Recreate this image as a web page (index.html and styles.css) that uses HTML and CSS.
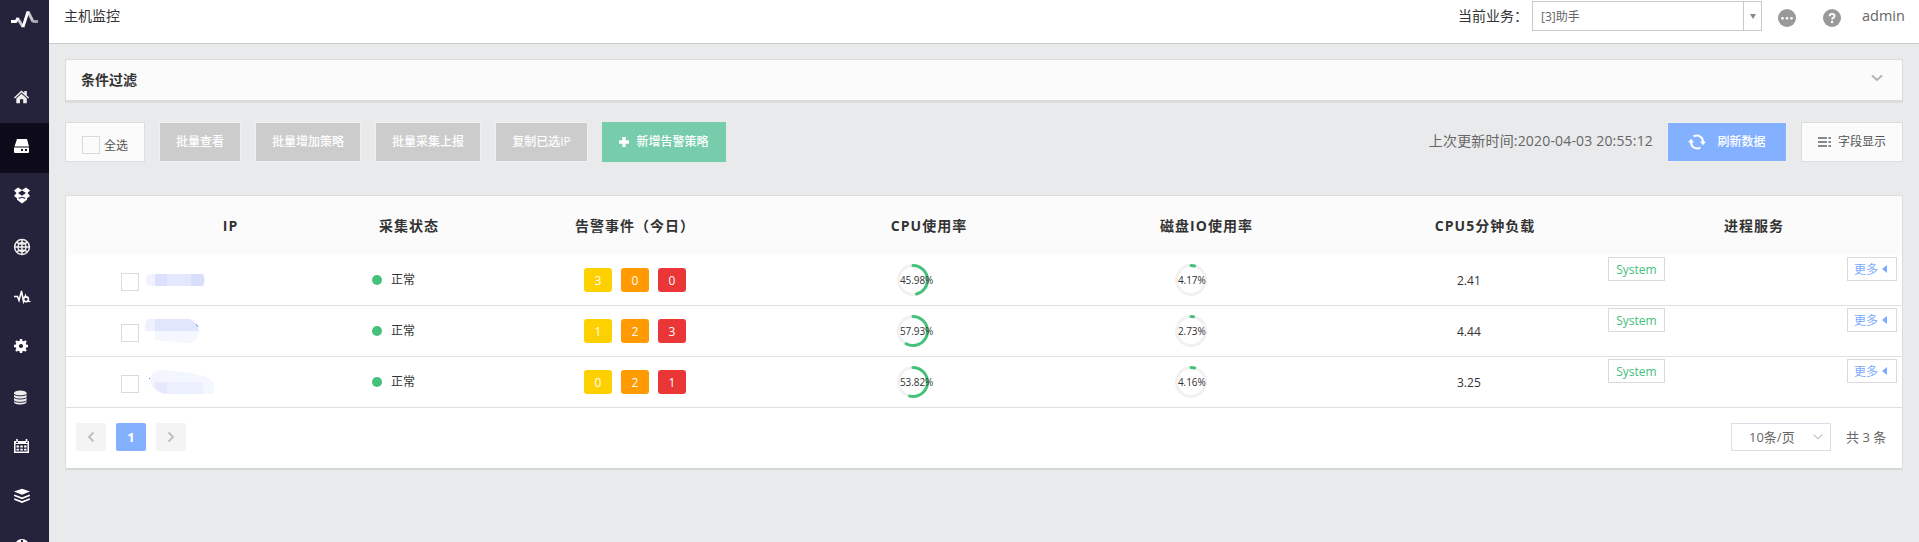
FILE: index.html
```html
<!DOCTYPE html>
<html lang="zh-CN">
<head>
<meta charset="utf-8">
<title>主机监控</title>
<link rel="stylesheet" href="styles.css">
</head>
<body>
<div class="app">
  <nav class="sidebar">
    <svg class="logo" viewBox="0 0 49 73"><g fill="none" stroke-width="2.800" stroke-linejoin="round"><path d="M17.500 18l5.500 9" stroke="#c9c8d2"/><path d="M28 11.500l5 10" stroke="#c9c8d2"/><path d="M11 21.500h5l2-3.500" stroke="#fff"/><path d="M23 27l5-15.500" stroke="#fff"/><path d="M32.500 21.500h5.500" stroke="#aaa9b8"/></g></svg>
    <svg class="item" viewBox="0 0 49 50"><path d="M14 24.500L21.500 17.500 24.300 20v-2h2.500v4.400l2.400 2.100-1 1.100-6.700-6-6.500 6z" fill="#eee"/><path d="M16.300 25.500l5.200-4.700 5.300 4.700v4.700h-3.600v-4h-3.200v4h-3.700z" fill="#eee"/></svg>
    <svg class="item active" viewBox="0 0 49 50"><path d="M17 16h10l2 7.500H14.500z" fill="#fff"/><path d="M14 24.500h15V29q0 1-1 1H15q-1 0-1-1z" fill="#fff"/><path d="M21 26h2v2h-2zM25 26h2v2h-2z" fill="#15132a"/></svg>
    <svg class="item" viewBox="0 0 49 50"><path fill="#fff" d="M18 14.500l4 2.500 4-2.500 4 3-2.500 2.500 2.500 3-3 2.300v1.500L22 30.500l-5-3.700v-1.500L14 23l2.500-3-2.500-2.500z"/><path fill="#25233b" d="M22 17.500l4 2.600-4 2.600-4-2.600zM18 25l4-1.200 4 1.200-1.500.8-2.500-1.100-2.500 1.100z"/></svg>
    <svg class="item" viewBox="0 0 49 50"><g fill="none" stroke="#eee" stroke-width="1.500"><circle cx="22" cy="24" r="7.400"/><ellipse cx="22" cy="24" rx="4" ry="4.500"/><path d="M15 24h14M22 17v14M17 19.500q5 3 10 0M17 28.500q5-3 10 0"/></g></svg>
    <svg class="item" viewBox="0 0 49 50"><path d="M14 23.500h3.500l1.500 4 2.500-9.500 2 10.500 2-6 1 3" fill="none" stroke="#fff" stroke-width="1.500"/><circle cx="26" cy="26.300" r="2.400" fill="#25233b" stroke="#fff" stroke-width="1.700"/><path d="M27.500 28.500h3" stroke="#fff" stroke-width="1.200"/></svg>
    <svg class="item" viewBox="0 0 49 50"><circle cx="21" cy="23" r="3.800" fill="none" stroke="#fff" stroke-width="3.400"/><path d="M21 16v3M21 27v3M14 23h3M25 23h3M16 18l2 2M24 26l2 2M26 18l-2 2M18 26l-2 2" stroke="#fff" stroke-width="2.400"/></svg>
    <svg class="item" viewBox="0 -1.500 49 50"><path d="M14 18.500v9c0 1.600 2.500 2.500 6.300 2.500s6.200-1 6.200-2.500v-9z" fill="#eee"/><ellipse cx="20.300" cy="18.500" rx="6.300" ry="2.500" fill="#eee"/><path d="M14 19.800c2 2 10.500 2 12.500 0M14 23c2 2 10.500 2 12.500 0M14 26.300c2 2 10.500 2 12.500 0" fill="none" stroke="#25233b"/></svg>
    <svg class="item" viewBox="0 0 49 50"><path fill="#fff" fill-rule="evenodd" d="M14 18h2v2h2v-2h8v2h1.500v-2H29v12H14zM15.500 21v7.500h12V21z"/><path d="M17 16v3M26.500 16v3" stroke="#fff" stroke-width="1.600"/><path d="M16.500 22.500h2.500v2h-2.500zM20.300 22.500h2.500v2h-2.500zM24.100 22.500h2.500v2h-2.500zM16.500 25.800h2.500v1.700h-2.500zM20.300 25.800h2.500v1.700h-2.500zM24.100 25.800h2.500v1.700h-2.500z" fill="#fff"/></svg>
    <svg class="item" viewBox="0 0 49 50"><path d="M14 18.500l8-2.800 8 2.800-8 3.300z" fill="#fff"/><path d="M14.200 22.300l7.800 3 7.800-3M14.200 26l7.800 3 7.800-3" fill="none" stroke="#fff" stroke-width="1.700"/></svg>
    <svg class="item" viewBox="0 0 49 50"><circle cx="22" cy="23.500" r="7.500" fill="#fff"/><path d="M22 17v7h4" stroke="#25233b" stroke-width="2" fill="none"/></svg>
  </nav>
  <div class="main">
    <header class="topbar">
      <h1>主机监控</h1>
      <label class="biz-label">当前业务：</label>
      <div class="biz-select"><span>[3]助手</span><b><i></i></b></div>
      <svg class="top-icon" viewBox="0 0 18 18"><circle cx="9" cy="9" r="9" fill="#999"/><g fill="#fff"><circle cx="4.500" cy="9.300" r="1.300"/><circle cx="9" cy="9.300" r="1.300"/><circle cx="13.500" cy="9.300" r="1.300"/></g></svg>
      <svg class="top-icon help" viewBox="0 0 18 18"><circle cx="9" cy="9" r="9" fill="#999"/><path d="M6.700 7.200q0-2.300 2.400-2.300t2.400 2q0 1.200-1.300 2-1.100.6-1.100 1.700" fill="none" stroke="#fff" stroke-width="1.900"/><circle cx="9.100" cy="13" r="1.200" fill="#fff"/></svg>
      <span class="user">admin</span>
    </header>
    <main class="content">
      <section class="filter"><h2>条件过滤</h2><svg viewBox="0 0 12 8"><path d="M1 1.500l5 4.500 5-4.500" fill="none" stroke="#b2b2b2" stroke-width="2"/></svg></section>
      <div class="toolbar">
        <label class="btn-light select-all"><i class="check"></i><span>全选</span></label>
        <button class="btn-grey">批量查看</button>
        <button class="btn-grey">批量增加策略</button>
        <button class="btn-grey">批量采集上报</button>
        <button class="btn-grey">复制已选IP</button>
        <button class="btn-green"><svg viewBox="0 0 10 10"><path d="M5 0v10M0 5h10" stroke="#fff" stroke-width="3.400"/></svg>新增告警策略</button>
        <span class="updated">上次更新时间:2020-04-03 20:55:12</span>
        <button class="btn-blue"><svg viewBox="0 0 18 16"><g fill="none" stroke="#fff" stroke-width="2"><path d="M5.500 2.500q3.500-2.200 7 .2Q15 4.500 15 8"/><path d="M12.500 13.500q-3.500 2.200-7-.2Q3 11.500 3 8"/></g><path d="M12 7.500h6l-3 3.800zM0 8.500h6L3 4.700z" fill="#fff"/></svg>刷新数据</button>
        <button class="btn-light fields"><svg viewBox="0 0 13 10"><path d="M0 1h9M0 5h9M0 9h9M10.500 1H13M10.500 5H13M10.500 9H13" stroke="#888" stroke-width="2"/></svg>字段显示</button>
      </div>
      <section class="table">
        <div class="row head"><span></span><span>IP</span><span>采集状态</span><span>告警事件（今日）</span><span>CPU使用率</span><span>磁盘IO使用率</span><span>CPU5分钟负载</span><span>进程服务</span></div>
        <div class="row">
          <div class="host"><i class="check"></i><svg class="mask" viewBox="0 0 72 26"><path d="M3 7h8v12H3q-4-6 0-12z" fill="#f1f2fe"/><path d="M10 7h12v12H10z" fill="#dcdffd"/><path d="M22 7h24v12H22z" fill="#e4e7fd"/><path d="M46 7h12q3 6 0 12H46z" fill="#dadefd"/></svg></div>
          <div class="status"><i></i>正常</div>
          <div class="alarms"><b class="y">3</b><b class="o">0</b><b class="r">0</b></div>
          <div class="gauge cpu"><svg viewBox="0 0 32 32"><circle class="track" cx="16" cy="16" r="14.500"/><circle class="arc" cx="16" cy="16" r="14.500" pathLength="100" stroke-dasharray="45.980 100"/></svg><span>45.98%</span></div>
          <div class="gauge io"><svg viewBox="0 0 32 32"><circle class="track" cx="16" cy="16" r="14.500"/><circle class="arc" cx="16" cy="16" r="14.500" pathLength="100" stroke-dasharray="4.170 100"/></svg><span>4.17%</span></div>
          <div class="load">2.41</div>
          <div class="procs"><span class="tag">System</span><span class="more">更多<i></i></span></div>
        </div>
        <div class="row">
          <div class="host"><i class="check"></i><svg class="mask" viewBox="0 0 72 26"><path d="M2 1h8v12H0q-1-6 2-12z" fill="#eff1fe"/><path d="M10 1h35q7 3 9 12H10z" fill="#e2e6fd"/><path d="M10 13h44q-1 13-15 12l-29-3z" fill="#f5f7ff"/><path d="M51 6l2 3" stroke="#5aaaf0"/></svg></div>
          <div class="status"><i></i>正常</div>
          <div class="alarms"><b class="y">1</b><b class="o">2</b><b class="r">3</b></div>
          <div class="gauge cpu"><svg viewBox="0 0 32 32"><circle class="track" cx="16" cy="16" r="14.500"/><circle class="arc" cx="16" cy="16" r="14.500" pathLength="100" stroke-dasharray="57.930 100"/></svg><span>57.93%</span></div>
          <div class="gauge io"><svg viewBox="0 0 32 32"><circle class="track" cx="16" cy="16" r="14.500"/><circle class="arc" cx="16" cy="16" r="14.500" pathLength="100" stroke-dasharray="2.730 100"/></svg><span>2.73%</span></div>
          <div class="load">4.44</div>
          <div class="procs"><span class="tag">System</span><span class="more">更多<i></i></span></div>
        </div>
        <div class="row">
          <div class="host"><i class="check"></i><svg class="mask" viewBox="0 0 72 26"><path d="M5 10q2-9 13-9l19 2q30 3 32 13v6H12Q5 18 5 10z" fill="#f3f5ff"/><path d="M10 13h12v12q-9 0-12-7z" fill="#e8e8fd"/><path d="M22 13h36v12H22z" fill="#eceffe"/><path d="M58 13h11v12H58z" fill="#f5f7ff"/><path d="M4 9h1v1H4z" fill="#667acc"/></svg></div>
          <div class="status"><i></i>正常</div>
          <div class="alarms"><b class="y">0</b><b class="o">2</b><b class="r">1</b></div>
          <div class="gauge cpu"><svg viewBox="0 0 32 32"><circle class="track" cx="16" cy="16" r="14.500"/><circle class="arc" cx="16" cy="16" r="14.500" pathLength="100" stroke-dasharray="53.820 100"/></svg><span>53.82%</span></div>
          <div class="gauge io"><svg viewBox="0 0 32 32"><circle class="track" cx="16" cy="16" r="14.500"/><circle class="arc" cx="16" cy="16" r="14.500" pathLength="100" stroke-dasharray="4.160 100"/></svg><span>4.16%</span></div>
          <div class="load">3.25</div>
          <div class="procs"><span class="tag">System</span><span class="more">更多<i></i></span></div>
        </div>
        <footer class="pager">
          <span class="page"><svg viewBox="0 0 8 12"><path d="M6.500 1.500L2 6l4.500 4.500" fill="none" stroke="#c0c0c4" stroke-width="2"/></svg></span>
          <span class="page current">1</span>
          <span class="page"><svg viewBox="0 0 8 12"><path d="M1.500 1.500L6 6l-4.500 4.500" fill="none" stroke="#c0c0c4" stroke-width="2"/></svg></span>
          <div class="size"><span>10条/页</span><svg viewBox="0 0 10 6"><path d="M.7.700L5 4.700 9.300.700" fill="none" stroke="#c0c4cc" stroke-width="1.200"/></svg></div>
          <span class="total">共 3 条</span>
        </footer>
      </section>
    </main>
  </div>
</div>
</body>
</html>
```

FILE: styles.css
```css
* { box-sizing: border-box; }
body { margin: 0; background: #e9eaeb; color: #333; font: 12px/20px "Open Sans", "Noto Sans CJK SC", sans-serif; }
h1, h2, b { margin: 0; font-weight: 400; }
svg { display: block; flex: none; }
i { flex: none; }
button { font: inherit; margin: 0; white-space: nowrap; }
.app { display: flex; height: 542px; overflow: hidden; white-space: nowrap; }
.sidebar { width: 49px; flex: none; height: 542px; overflow: hidden; background: #25233b; }
.logo { width: 49px; height: 73px; }
.item { width: 49px; height: 50px; }
.item.active { background: #0d0b19; }
.main { flex: 1; min-width: 0; }

.topbar { display: flex; align-items: flex-start; height: 44px; background: #fff; border-bottom: 1px solid #c8cdcc; padding: 1px 16px 0 15px; }
.topbar h1 { font-size: 14px; line-height: 30px; margin-right: auto; }
.biz-label { width: 74px; font-size: 14px; line-height: 29px; }
.biz-select { display: flex; width: 230px; height: 30px; border: 1px solid #c8c8c8; color: #666; line-height: 30px; padding-left: 8px; }
.biz-select b { display: flex; align-items: center; justify-content: center; width: 18px; margin-left: auto; border-left: 1px solid #c8c8c8; }
.biz-select i { border: 3px solid transparent; border-top: 5px solid #888; border-bottom: 0; }
.top-icon { width: 18px; height: 18px; margin: 8px 0 0 16px; }
.top-icon.help { margin-left: 27px; }
.user { width: 41px; margin-left: 21px; font-size: 14.500px; line-height: 30px; color: #666; }

.content { padding: 15px 16px 0; }
.filter { display: flex; align-items: center; justify-content: space-between; height: 44px; padding: 0 19px 0 15px; background: #fbfbfb; border: 1px solid #dcdcde; border-bottom-width: 3px; }
.filter h2 { font-size: 14px; font-weight: 700; }
.filter svg { width: 12px; height: 8px; margin-top: -4px; }

.toolbar { display: flex; align-items: center; height: 40px; margin-top: 19px; }
.toolbar button { display: flex; align-items: center; justify-content: center; padding: 0; }
.btn-light { height: 40px; background: #fbfbfb; border: 1px solid #dcdddd; color: #555; }
.check { width: 18px; height: 18px; border: 1px solid #dadada; background: #fff; }
.select-all { display: flex; width: 80px; padding: 13px 0 0 16px; margin-right: 15px; }
.select-all .check { background: #fbfbfb; }
.select-all span { margin-left: 4px; }
.btn-grey { width: 82px; height: 40px; margin-left: -1px; border: 1px solid #eeefef; background: #ccc; color: #fff; font-weight: 500; }
.toolbar .btn-grey { margin-right: 14px; }
.btn-grey + .btn-grey { width: 106px; margin-left: 0; }
.btn-grey + .btn-grey + .btn-grey + .btn-grey { width: 93px; }
.btn-green { width: 124px; height: 40px; border: 0; background: #76ccab; color: #fff; font-weight: 500; }
.btn-green svg { width: 10px; height: 10px; margin-right: 7px; }
.updated { margin-left: auto; padding-bottom: 2px; font-size: 14px; letter-spacing: .17px; color: #666; }
.btn-blue { width: 120px; height: 40px; border: 1px solid #eeefef; background: #84b1ff; color: #fff; font-weight: 500; }
.toolbar .btn-blue { margin: 0 14px; }
.btn-blue svg { width: 18px; height: 16px; margin-right: 11px; }
.fields { width: 102px; }
.fields svg { width: 13px; height: 10px; margin-right: 7px; }

.table { margin-top: 33px; border: 1px solid #dcdddd; border-bottom: 2px solid #d5d8d9; background: #fff; }
.row { display: grid; grid-template-columns: 249px 212px 348px 240px 315px 174px 1fr; height: 51px; border-bottom: 1px solid #e0e0e0; }
.row.head { grid-template-columns: 38px 253px 104px 348px 240px 315px 242px 1fr; height: 59px; border: 0; background: #fbfbfb; line-height: 60px; text-align: center; font-size: 14px; letter-spacing: 1px; font-weight: 700; }
.host { display: flex; padding: 18px 0 0 55px; }
.mask { width: 72px; height: 26px; margin: -6px 0 0 6px; }
.status { display: flex; align-items: center; padding-left: 57px; height: 50px; }
.status i { width: 10px; height: 10px; border-radius: 50%; background: #45c17c; margin-right: 9px; }
.alarms { display: flex; gap: 9px; padding: 13px 0 0 57px; }
.alarms b { width: 28px; height: 24px; border-radius: 3px; color: #fff; text-align: center; line-height: 25px; }
.y { background: #ffd000; }
.o { background: #ff9b00; }
.r { background: #ea3636; }
.gauge { display: grid; grid-template-columns: 32px; align-content: start; padding-top: 9px; }
.gauge svg, .gauge span { grid-area: 1 / 1; }
.gauge svg { width: 32px; height: 32px; transform: rotate(-90deg); }
.gauge span { position: relative; padding-left: 3px; font-size: 10px; line-height: 32px; letter-spacing: -.1px; }
.gauge.cpu { padding-left: 22px; }
.gauge.io { padding-left: 60px; }
.track, .arc { fill: none; stroke-width: 3; stroke: #f2f0f0; }
.arc { stroke: #45c17c; stroke-linecap: round; }
.load { padding-left: 27px; line-height: 51px; }
.procs { display: flex; justify-content: space-between; align-items: flex-start; padding: 2px 5px 0 4px; }
.tag, .more { height: 24px; border: 1px solid #dadada; line-height: 23px; background: #fff; }
.tag { width: 57px; text-align: center; color: #45c17c; }
.more { display: flex; align-items: center; width: 50px; padding-left: 6px; color: #7dabff; }
.more i { margin-left: 4px; border: 4px solid transparent; border-right: 5px solid #7dabff; border-left: 0; }

.pager { display: flex; align-items: center; height: 60px; padding: 0 15px 2px 10px; gap: 10px; font-size: 13px; color: #666; }
.page { display: flex; align-items: center; justify-content: center; width: 30px; height: 28px; border-radius: 2px; background: #f4f4f5; }
.page svg { width: 8px; height: 12px; }
.page.current { background: #84b1ff; color: #fff; font-weight: 700; }
.size { display: flex; align-items: center; width: 100px; height: 28px; border: 1px solid #dcdde6; padding-left: 17px; margin-left: auto; margin-right: 5px; }
.size svg { width: 10px; height: 6px; margin: 0 7px 0 auto; }
.total { width: 41px; }
```
